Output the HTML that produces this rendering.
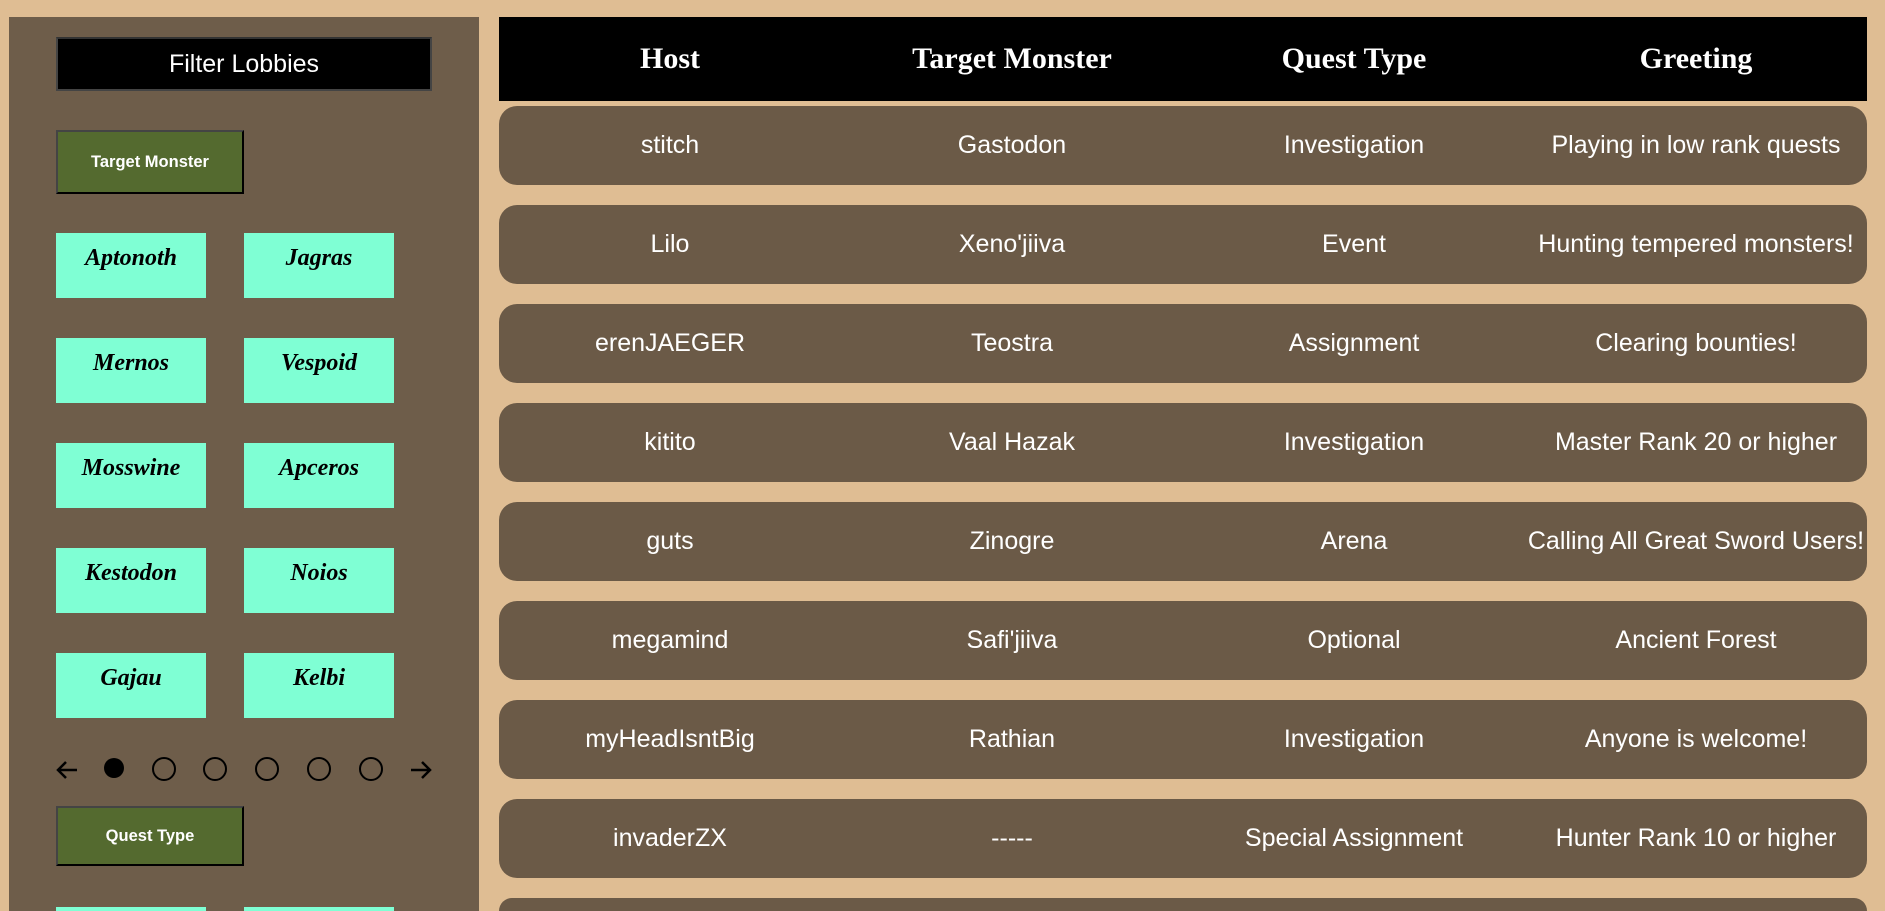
<!DOCTYPE html>
<html style="overflow:hidden;height:911px"><head><style>
body{margin:0;width:1885px;height:911px;overflow:hidden;background:#dfbd93;font-family:"Liberation Sans",sans-serif;position:relative}
.side{position:absolute;left:9px;top:17px;width:470px;height:894px;background:#6e5d4a}
.abs{position:absolute}
.title{left:56px;top:37px;width:372px;height:50px;background:#000;border:2px solid #444;border-top-color:#333;color:#fff;font-size:25px;text-align:center;line-height:50px}
.gbtn{width:184px;height:60px;background:#546a2f;border:2px solid #000;border-top-color:#444;border-left-color:#444;color:#fff;font-weight:bold;font-size:16.5px;text-align:center;line-height:60px}
.cy{width:150px;height:65px;background:#7fffd4;font-family:"Liberation Serif",serif;font-style:italic;font-weight:bold;font-size:24px;text-align:center;line-height:50px;color:#000}
.hdr{left:499px;top:17px;width:1368px;height:84px;background:#000;display:flex}
.hdr div,.row div{flex:1;text-align:center}
.hdr div{color:#fff;font-family:"Liberation Serif",serif;font-weight:bold;font-size:30px;line-height:84px}
.row{position:absolute;left:499px;width:1368px;height:79px;background:#6b5a47;border-radius:18px;display:flex;color:#fff;font-size:25px;line-height:79px;white-space:nowrap}
.dot{border:2.5px solid #000;border-radius:50%;top:757px;box-sizing:border-box;width:24px;height:24px}
</style></head><body>
<div class="side"></div>
<div class="abs title">Filter Lobbies</div>
<div class="abs gbtn" style="left:56px;top:130px">Target Monster</div>
<div class="abs cy" style="left:56px;top:233px">Aptonoth</div><div class="abs cy" style="left:244px;top:233px">Jagras</div>
<div class="abs cy" style="left:56px;top:338px">Mernos</div><div class="abs cy" style="left:244px;top:338px">Vespoid</div>
<div class="abs cy" style="left:56px;top:443px">Mosswine</div><div class="abs cy" style="left:244px;top:443px">Apceros</div>
<div class="abs cy" style="left:56px;top:548px">Kestodon</div><div class="abs cy" style="left:244px;top:548px">Noios</div>
<div class="abs cy" style="left:56px;top:653px">Gajau</div><div class="abs cy" style="left:244px;top:653px">Kelbi</div>
<svg class="abs" style="left:55px;top:758px" width="24" height="24" viewBox="0 0 24 24"><path d="M22 12H3M11 4L3 12L11 20" fill="none" stroke="#000" stroke-width="2.5"/></svg>
<div class="abs" style="left:104px;top:758px;width:20px;height:20px;border-radius:50%;background:#000"></div>
<div class="abs dot" style="left:152px"></div>
<div class="abs dot" style="left:203px"></div>
<div class="abs dot" style="left:255px"></div>
<div class="abs dot" style="left:307px"></div>
<div class="abs dot" style="left:359px"></div>
<svg class="abs" style="left:409px;top:758px" width="24" height="24" viewBox="0 0 24 24"><path d="M2 12H21M13 4L21 12L13 20" fill="none" stroke="#000" stroke-width="2.5"/></svg>
<div class="abs gbtn" style="left:56px;top:806px;height:56px;line-height:56px">Quest Type</div>
<div class="abs cy" style="left:56px;top:907px;height:4px"></div><div class="abs cy" style="left:244px;top:907px;height:4px"></div>
<div class="abs hdr"><div>Host</div><div>Target Monster</div><div>Quest Type</div><div>Greeting</div></div>
<div class="row" style="top:106px"><div>stitch</div><div>Gastodon</div><div>Investigation</div><div>Playing in low rank quests</div></div>
<div class="row" style="top:205px"><div>Lilo</div><div>Xeno'jiiva</div><div>Event</div><div>Hunting tempered monsters!</div></div>
<div class="row" style="top:304px"><div>erenJAEGER</div><div>Teostra</div><div>Assignment</div><div>Clearing bounties!</div></div>
<div class="row" style="top:403px"><div>kitito</div><div>Vaal Hazak</div><div>Investigation</div><div>Master Rank 20 or higher</div></div>
<div class="row" style="top:502px"><div>guts</div><div>Zinogre</div><div>Arena</div><div>Calling All Great Sword Users!</div></div>
<div class="row" style="top:601px"><div>megamind</div><div>Safi'jiiva</div><div>Optional</div><div>Ancient Forest</div></div>
<div class="row" style="top:700px"><div>myHeadIsntBig</div><div>Rathian</div><div>Investigation</div><div>Anyone is welcome!</div></div>
<div class="row" style="top:799px"><div>invaderZX</div><div>-----</div><div>Special Assignment</div><div>Hunter Rank 10 or higher</div></div>
<div class="row" style="top:898px;height:13px;border-radius:18px 18px 0 0"></div>
</body></html>
